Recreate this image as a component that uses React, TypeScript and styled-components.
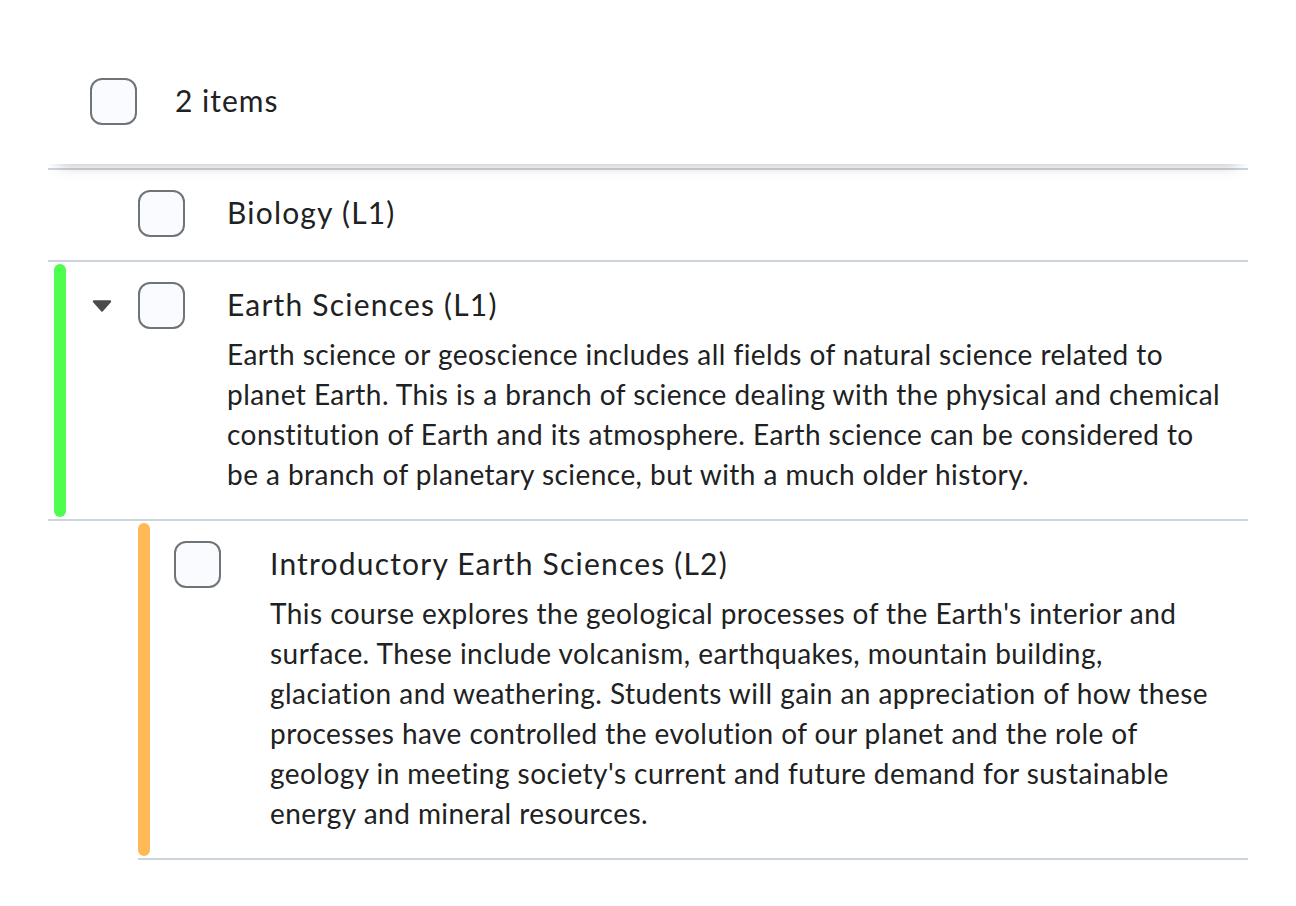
import styled, { createGlobalStyle } from "styled-components";

const GlobalStyle = createGlobalStyle`
  html, body {
    margin: 0;
    padding: 0;
    background: #ffffff;
  }
  body {
    font-family: Lato, "Open Sans", sans-serif;
    color: #202122;
  }
`;

const COLOR = {
  TEXT: "#202122",
  FERRITE: "#494c4e",
  GALENA: "#6e7477",
  REGOLITH: "#f9fbff",
  MICA: "#cdd5dc",
};

const Page = styled.div`
  padding: 48px 48px;
`;

const Header = styled.div`
  position: relative;
  z-index: 1;
  display: flex;
  align-items: center;
  gap: 38px;
  padding: 30px 0 39px 42px;
  margin-bottom: 4px;
  background: #ffffff;
  box-shadow: 0 10px 14px -10px rgba(0, 0, 0, 0.3);
  clip-path: inset(0 0 -40px 0);
`;

const HeaderLabel = styled.div`
  font-size: 30px;
  line-height: 44px;
  letter-spacing: 1px;
  margin-top: -3px;
`;

const List = styled.div`
  border-top: 2px solid ${COLOR.MICA};
`;

const Nested = styled.div<{ $indent: number }>`
  margin-left: ${(p) => p.$indent}px;
`;

const Row = styled.div`
  display: flex;
  align-items: stretch;
  border-bottom: 2px solid ${COLOR.MICA};
`;

const ColorBar = styled.div<{ $color?: string; $offset: number }>`
  flex: 0 0 12px;
  width: 12px;
  margin: 2px 0 2px ${(p) => p.$offset}px;
  border-radius: 6px;
  background: ${(p) => p.$color || "transparent"};
`;

const CaretCell = styled.div<{ $width: number }>`
  flex: 0 0 ${(p) => p.$width}px;
  display: flex;
  justify-content: center;
  align-items: center;
  height: 47px;
  padding-top: 20px;
`;

const CheckCell = styled.div<{ $gap: number }>`
  flex: 0 0 auto;
  margin-left: ${(p) => p.$gap}px;
  padding: 20px 0 23px;
`;

const Checkbox = styled.div`
  box-sizing: border-box;
  width: 47px;
  height: 47px;
  border: 2px solid ${COLOR.GALENA};
  border-radius: 12px;
  background: ${COLOR.REGOLITH};
`;

const Content = styled.div<{ $gap: number }>`
  flex: 1 1 auto;
  min-width: 0;
  margin-left: ${(p) => p.$gap}px;
  padding: 20px 16px 25px 0;
`;

const Title = styled.div`
  font-size: 30px;
  line-height: 44px;
  letter-spacing: 1.2px;
  color: ${COLOR.TEXT};
`;

const Description = styled.div`
  margin-top: 8px;
  font-size: 28px;
  line-height: 40px;
  letter-spacing: 0.45px;
  color: ${COLOR.TEXT};
`;

const Caret = () => (
  <svg width="20" height="12" viewBox="0 0 20 12">
    <path
      d="M2 1.5 L18 1.5 L10 10.5 Z"
      fill={COLOR.FERRITE}
      stroke={COLOR.FERRITE}
      strokeWidth="2.4"
      strokeLinejoin="round"
    />
  </svg>
);

const App = () => {
  return (
    <>
      <GlobalStyle />
      <Page>
        <Header>
          <Checkbox />
          <HeaderLabel>2 items</HeaderLabel>
        </Header>
        <List>
          <Row>
            <ColorBar $offset={6} />
            <CaretCell $width={72} />
            <CheckCell $gap={0}>
              <Checkbox />
            </CheckCell>
            <Content $gap={42}>
              <Title>Biology (L1)</Title>
            </Content>
          </Row>
          <Row>
            <ColorBar $offset={6} $color="#4efd4e" />
            <CaretCell $width={72}>
              <Caret />
            </CaretCell>
            <CheckCell $gap={0}>
              <Checkbox />
            </CheckCell>
            <Content $gap={42}>
              <Title>Earth Sciences (L1)</Title>
              <Description>
                Earth science or geoscience includes all fields of natural
                science related to planet Earth. This is a branch of science
                dealing with the physical and chemical constitution of Earth and
                its atmosphere. Earth science can be considered to be a branch
                of planetary science, but with a much older history.
              </Description>
            </Content>
          </Row>
          <Nested $indent={90}>
            <Row>
              <ColorBar $offset={0} $color="#ffb957" />
              <CheckCell $gap={24}>
                <Checkbox />
              </CheckCell>
              <Content $gap={49}>
                <Title>Introductory Earth Sciences (L2)</Title>
                <Description>
                  This course explores the geological processes of the Earth's
                  interior and surface. These include volcanism, earthquakes,
                  mountain building, glaciation and weathering. Students will
                  gain an appreciation of how these processes have controlled
                  the evolution of our planet and the role of geology in meeting
                  society's current and future demand for sustainable energy and
                  mineral resources.
                </Description>
              </Content>
            </Row>
          </Nested>
        </List>
      </Page>
    </>
  );
};

export default App;
